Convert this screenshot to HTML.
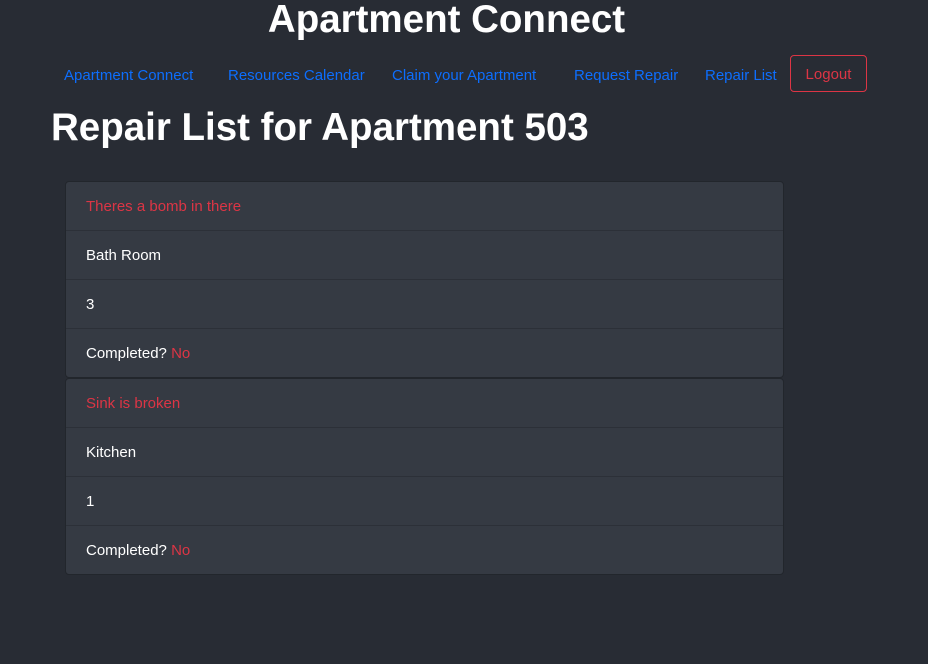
<!DOCTYPE html>
<html><head><style>
body{margin:0;background:#282c34;font-family:"Liberation Sans",sans-serif;width:928px;height:664px;overflow:hidden;position:relative}
.t{position:absolute;left:0;width:893px;text-align:center;top:-2px;color:#fff;font-size:38.5px;font-weight:bold}
.nav a{position:absolute;top:67px;color:#0d6efd;font-size:15px;text-decoration:none;white-space:nowrap}
.lo{position:absolute;left:790px;top:55px;width:75px;height:35px;border:1px solid #dc3545;border-radius:4px;color:#dc3545;font-size:15px;text-align:center;line-height:37px}
h1{position:absolute;left:51px;top:106px;margin:0;color:#fff;font-size:38.5px;font-weight:bold}
.card{position:absolute;left:65px;width:717px;background:#353a43;border:1px solid #22262c;border-radius:4px}
.r{height:48px;line-height:50px;padding-left:20px;color:#fff;font-size:15px;border-bottom:1px solid #2c3038}
.r:last-child{border-bottom:none}
.red{color:#dc3545}
</style></head><body>
<div class="t">Apartment Connect</div>
<div class="nav">
<a style="left:64px">Apartment Connect</a>
<a style="left:228px">Resources Calendar</a>
<a style="left:392px">Claim your Apartment</a>
<a style="left:574px">Request Repair</a>
<a style="left:705px">Repair List</a>
</div>
<div class="lo">Logout</div>
<h1>Repair List for Apartment 503</h1>
<div class="card" style="top:181px">
<div class="r red">Theres a bomb in there</div>
<div class="r">Bath Room</div>
<div class="r">3</div>
<div class="r">Completed? <span class="red">No</span></div>
</div>
<div class="card" style="top:378px">
<div class="r red">Sink is broken</div>
<div class="r">Kitchen</div>
<div class="r">1</div>
<div class="r">Completed? <span class="red">No</span></div>
</div>
</body></html>
